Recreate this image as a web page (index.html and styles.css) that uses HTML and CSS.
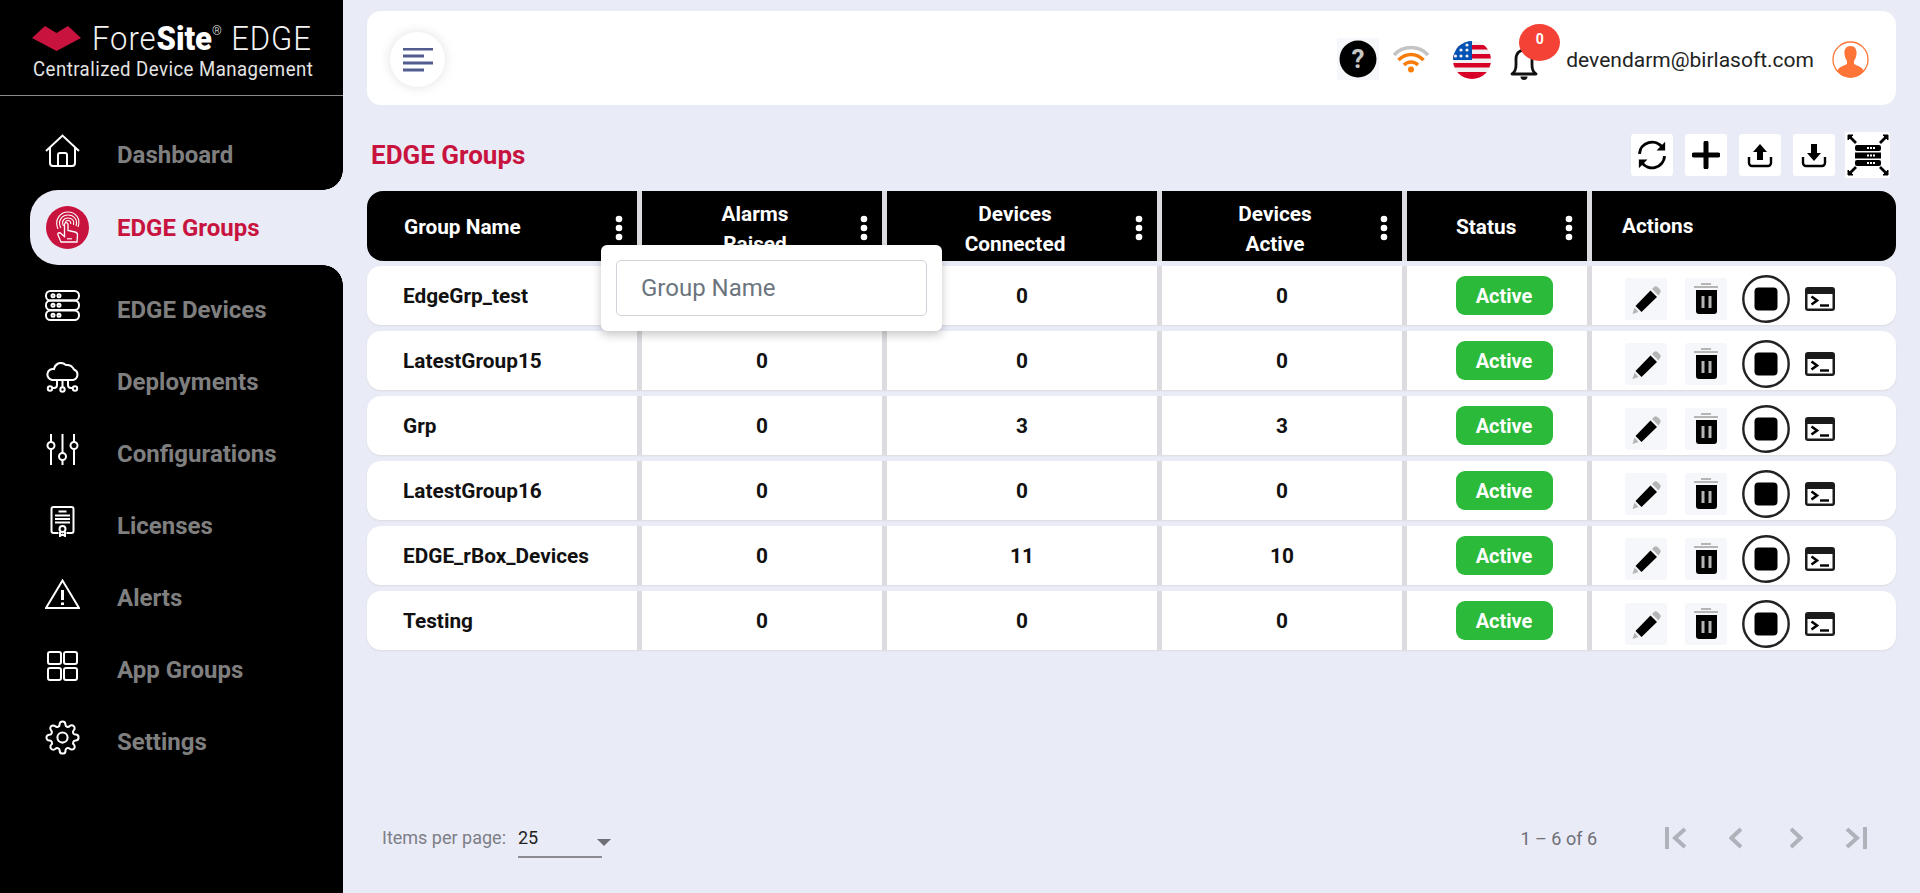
FILE: index.html
```html
<!DOCTYPE html>
<html lang="en">
<head>
<meta charset="utf-8">
<title>EDGE Groups</title>
<link rel="stylesheet" href="styles.css">
</head>
<body>
<svg class="defs" width="0" height="0" aria-hidden="true">
  <defs>
    <symbol id="i-pencil" viewBox="0 0 42 42">
      <path d="M13.500 34 L7.500 36 L9.500 29.500 Z" fill="#b5b5b5"/>
      <path d="M10.500 28 L25.500 12.500 L32 19 L16.500 34 Z" fill="#000"/>
      <path d="M27 11 L29 9 A2.500 2.500 0 0 1 32.500 9 L35 11.500 A2.500 2.500 0 0 1 35 15 L33.500 17.500 Z" fill="#b5b5b5"/>
    </symbol>
    <symbol id="i-trash" viewBox="0 0 42 42">
      <path d="M16 7 V5 H26 V7 Z" fill="#b5b5b5"/>
      <path d="M9 9 H33" stroke="#b5b5b5" stroke-width="2"/>
      <path d="M11 12 H32 V33 A3 3 0 0 1 29 36 H14 A3 3 0 0 1 11 33 Z" fill="#000"/>
      <path d="M18 18 V30 M25 18 V30" stroke="#b5b5b5" stroke-width="3"/>
    </symbol>
    <symbol id="i-stop" viewBox="0 0 48 48">
      <circle cx="24" cy="24" r="22.700" fill="#fff" stroke="#222" stroke-width="2.400"/>
      <rect x="12.500" y="12.500" width="23" height="23" rx="4" fill="#000"/>
    </symbol>
    <symbol id="i-term" viewBox="0 0 30 24">
      <rect width="30" height="24" rx="3" fill="#1b1b1b"/>
      <rect x="2.500" y="7" width="25" height="14.500" fill="#fff"/>
      <path d="M6.500 9.500 L12 13.500 L6.500 17.500" fill="none" stroke="#000" stroke-width="2.600"/>
      <path d="M15 18.500 H24" stroke="#000" stroke-width="2.400"/>
    </symbol>
    <symbol id="i-kebab" viewBox="0 0 8 26">
      <circle cx="4" cy="4" r="3.300" fill="#fff"/>
      <circle cx="4" cy="13" r="3.300" fill="#fff"/>
      <circle cx="4" cy="22" r="3.300" fill="#fff"/>
    </symbol>
    <clipPath id="flag-clip"><circle cx="19" cy="19" r="19"/></clipPath>
  </defs>
</svg>

<div class="app">
  <aside class="sidebar">
    <div class="brand">
      <div class="brand-top">
        <svg class="brand-mark" viewBox="0 0 49 25"><path d="M0 12 L13 0 L24.500 7 L36 0 L49 12 L24.500 25 Z" fill="#c8133f"/></svg>
        <span class="brand-name">Fore<b>Site</b><sup>®</sup> EDGE</span>
      </div>
      <div class="brand-sub">Centralized Device Management</div>
    </div>
    <nav class="nav">
      <a class="nav-item">
        <svg class="nav-icon" width="35" height="33" viewBox="0 0 35 33"><path d="M1 17 L17.500 1.500 L34 17 M5 13.500 V29 A3 3 0 0 0 8 32 H27 A3 3 0 0 0 30 29 V13.500 M13 32 V21 A2 2 0 0 1 15 19 H20 A2 2 0 0 1 22 21 V32"/></svg>
        <span>Dashboard</span>
      </a>
      <a class="nav-item active">
        <span class="nav-badge">
          <svg width="43" height="43" viewBox="0 0 43 43">
            <g fill="none" stroke="#fff" stroke-width="1.100">
              <path d="M12 23 C8 14 14 6 22 6 C30 6 35 13 32 21"/>
              <path d="M15 22 C11 15 16 9 22 9 C28 9 32 14 30 20"/>
              <path d="M17.500 20 C15 15 18 12 22 12 C26 12 29 15 27.500 19"/>
              <path d="M19.500 17.500 C19 15 20.500 14.500 22 14.500 C24 14.500 25 16 24.800 18"/>
              <path d="M15 36 L12 29 C11 27 13.500 26 15 27.500 L18.500 30.500 L18.500 18.500 C18.500 16 22 16 22 18.500 L22 24.500 L29 26 C31 26.500 31.500 27.500 31.500 29 L31 36 Z" fill="#c8133f" stroke-width="1.300"/>
              <path d="M21 32.800 H26"/>
            </g>
          </svg>
        </span>
        <span>EDGE Groups</span>
      </a>
      <a class="nav-item">
        <svg class="nav-icon" width="35" height="31" viewBox="0 0 35 31"><rect x="1" y="1" width="33" height="9.500" rx="4.500"/><rect x="1" y="10.500" width="33" height="9.500" rx="4.500"/><rect x="1" y="20.500" width="33" height="9.500" rx="4.500"/><circle cx="8" cy="5.700" r="1.500"/><circle cx="14" cy="5.700" r="1.500"/><circle cx="8" cy="15.300" r="1.500"/><circle cx="14" cy="15.300" r="1.500"/><circle cx="8" cy="25.300" r="1.500"/><circle cx="14" cy="25.300" r="1.500"/></svg>
        <span>EDGE Devices</span>
      </a>
      <a class="nav-item">
        <svg class="nav-icon" width="35" height="31" viewBox="0 0 35 31"><path d="M7 18 H28 A5.500 5.500 0 0 0 29 7.500 A8 8 0 0 0 21 3 A8 8 0 0 0 13 1.500 A8 8 0 0 0 9 7 A5.500 5.500 0 0 0 7 18 Z"/><path d="M12 18 V23 A3 3 0 0 1 9 26 H7 M17.500 18 V25 M23 18 V23 A3 3 0 0 0 26 26 H28"/><circle cx="5" cy="26.500" r="2.200"/><circle cx="17.500" cy="27.500" r="2.200"/><circle cx="30" cy="26.500" r="2.200"/></svg>
        <span>Deployments</span>
      </a>
      <a class="nav-item">
        <svg class="nav-icon" width="33" height="32" viewBox="0 0 33 32"><path d="M5 0 V8 M5 15 V31 M16.500 0 V19 M16.500 26 V31 M28 0 V8 M28 15 V31"/><circle cx="5" cy="11.500" r="3.500"/><circle cx="16.500" cy="22.500" r="3.500"/><circle cx="28" cy="11.500" r="3.500"/></svg>
        <span>Configurations</span>
      </a>
      <a class="nav-item">
        <svg class="nav-icon" width="24" height="31" viewBox="0 0 24 31"><path d="M8 27 H3 A2 2 0 0 1 1 25 V3 A2 2 0 0 1 3 1 H21 A2 2 0 0 1 23 3 V25 A2 2 0 0 1 21 27 H16"/><path d="M8 5.500 H16 M4.500 9.500 H19.500 M4.500 13 H19.500 M4.500 16.500 H19.500"/><circle cx="12" cy="23" r="3"/><path d="M9.500 26 V30 L12 28.500 L14.500 30 V26"/></svg>
        <span>Licenses</span>
      </a>
      <a class="nav-item">
        <svg class="nav-icon" width="35" height="30" viewBox="0 0 35 30"><path d="M17.500 1.500 L34 29 H1 Z"/><path class="thick" d="M17.500 11 V21 M17.500 23.500 V26"/></svg>
        <span>Alerts</span>
      </a>
      <a class="nav-item">
        <svg class="nav-icon" width="31" height="30" viewBox="0 0 31 30"><rect x="1" y="1" width="13" height="12" rx="2"/><rect x="17" y="1" width="13" height="12" rx="2"/><rect x="1" y="17" width="13" height="12" rx="2"/><rect x="17" y="17" width="13" height="12" rx="2"/></svg>
        <span>App Groups</span>
      </a>
      <a class="nav-item">
        <svg class="nav-icon" width="35" height="35" viewBox="0 0 24 24"><circle class="thin" cx="12" cy="12" r="3.500"/><path class="thin" d="M19.400 15a1.650 1.650 0 0 0 .33 1.820l.06.06a2 2 0 0 1 0 2.830 2 2 0 0 1-2.830 0l-.06-.06a1.650 1.650 0 0 0-1.820-.33 1.650 1.650 0 0 0-1 1.510V21a2 2 0 0 1-2 2 2 2 0 0 1-2-2v-.09A1.650 1.650 0 0 0 9 19.400a1.650 1.650 0 0 0-1.820.33l-.06.06a2 2 0 0 1-2.830 0 2 2 0 0 1 0-2.830l.06-.06a1.650 1.650 0 0 0 .33-1.820 1.650 1.650 0 0 0-1.510-1H3a2 2 0 0 1-2-2 2 2 0 0 1 2-2h.09A1.650 1.650 0 0 0 4.600 9a1.650 1.650 0 0 0-.33-1.820l-.06-.06a2 2 0 0 1 0-2.830 2 2 0 0 1 2.830 0l.06.06a1.650 1.650 0 0 0 1.820.33H9a1.650 1.650 0 0 0 1-1.510V3a2 2 0 0 1 2-2 2 2 0 0 1 2 2v.09a1.650 1.650 0 0 0 1 1.510 1.650 1.650 0 0 0 1.820-.33l.06-.06a2 2 0 0 1 2.830 0 2 2 0 0 1 0 2.830l-.06.06a1.650 1.650 0 0 0-.33 1.820V9a1.650 1.650 0 0 0 1.510 1H21a2 2 0 0 1 2 2 2 2 0 0 1-2 2h-.09a1.650 1.650 0 0 0-1.510 1z"/></svg>
        <span>Settings</span>
      </a>
    </nav>
  </aside>

  <main class="main">
    <header class="topbar">
      <button class="menu-btn" type="button" aria-label="Menu">
        <svg width="30" height="24" viewBox="0 0 30 24"><path d="M0 2 H30 M0 9 H21 M0 16 H30 M0 23 H21" transform="translate(0,-1)" stroke="#525c8f" stroke-width="2.800"/></svg>
      </button>
      <div class="top-tools">
        <span class="help-box">
          <svg width="38" height="38" viewBox="0 0 38 38"><circle cx="19" cy="19" r="18.500" fill="#000"/><text x="19" y="28" class="help-mark">?</text></svg>
        </span>
        <svg class="wifi" width="38" height="29" viewBox="0 0 38 29"><path d="M2 11 C11 1 27 1 36 11" fill="none" stroke="#c4c4c4" stroke-width="3.500"/><path d="M6.500 16 C14 8.500 24 8.500 31.500 16" fill="none" stroke="#f97b09" stroke-width="3.500"/><path d="M12 21 C16 17 22 17 26 21" fill="none" stroke="#f97b09" stroke-width="3.500"/><circle cx="19" cy="25.500" r="3" fill="#f97b09"/></svg>
        <svg class="flag" width="38" height="38" viewBox="0 0 38 38">
          <g clip-path="url(#flag-clip)">
            <rect width="38" height="38" fill="#f0f0f0"/>
            <rect y="4" width="38" height="4.500" fill="#d80027"/>
            <rect y="13" width="38" height="4.500" fill="#d80027"/>
            <rect y="22" width="38" height="4.500" fill="#d80027"/>
            <rect y="31" width="38" height="7" fill="#d80027"/>
            <path d="M0 0 H19 V19 H0 Z" fill="#0052b4"/>
            <g fill="#f0f0f0"><circle cx="14" cy="4" r="1.600"/><circle cx="8" cy="9" r="1.600"/><circle cx="14" cy="9" r="1.600"/><circle cx="2.500" cy="15" r="1.600"/><circle cx="8" cy="15" r="1.600"/><circle cx="14" cy="15" r="1.600"/></g>
          </g>
        </svg>
        <span class="bell">
          <svg width="28" height="32" viewBox="0 0 28 32"><path d="M2 26 C5 24 6 21 6 17 V11 C6 5 10 2 14 2 C18 2 22 5 22 11 V17 C22 21 23 24 26 26 Z" fill="#fff" stroke="#111" stroke-width="2.800" stroke-linejoin="round"/><path d="M10.500 28.500 A3.500 3.500 0 0 0 17.500 28.500 Z" fill="#111"/></svg>
          <span class="bell-count">0</span>
        </span>
        <span class="user-mail">devendarm@birlasoft.com</span>
        <svg class="avatar" width="37" height="37" viewBox="0 0 37 37"><circle cx="18.500" cy="18.500" r="17.500" fill="#fff" stroke="#ff7437" stroke-width="1.300"/><path d="M18.500 5 C14 5 12 8.500 12.500 13 C12.800 16 13.800 18 15 20 V23 C11 25 7 26 5 30 A17 17 0 0 0 32 30 C30 26 26 25 22 23 V20 C23.200 18 24.200 16 24.500 13 C25 8.500 23 5 18.500 5 Z" fill="#ff7437"/></svg>
      </div>
    </header>

    <div class="title-row">
      <h1 class="page-title">EDGE Groups</h1>
      <div class="toolbar">
        <button class="tool" type="button" aria-label="Refresh">
          <svg width="32" height="32" viewBox="0 0 28 28"><path d="M3 13 A11 11 0 0 1 23 7.500" fill="none" stroke="#000" stroke-width="2.600"/><path d="M25.500 2.500 V10 H18 Z" fill="#000"/><path d="M25 15 A11 11 0 0 1 5 20.500" fill="none" stroke="#000" stroke-width="2.600"/><path d="M2.500 25.500 V18 H10 Z" fill="#000"/></svg>
        </button>
        <button class="tool" type="button" aria-label="Add">
          <svg width="28" height="28" viewBox="0 0 28 28"><path d="M14 2 V26 M2 14 H26" stroke="#000" stroke-width="5" stroke-linecap="round"/></svg>
        </button>
        <button class="tool" type="button" aria-label="Upload">
          <svg width="26" height="26" viewBox="0 0 26 26"><path d="M13 2 L20 10 H16 V18 H10 V10 H6 Z" fill="#000"/><path d="M2 15 V21 A3 3 0 0 0 5 24 H21 A3 3 0 0 0 24 21 V15" fill="none" stroke="#000" stroke-width="2.400"/></svg>
        </button>
        <button class="tool" type="button" aria-label="Download">
          <svg width="26" height="26" viewBox="0 0 26 26"><path d="M13 19 L6 11 H10 V2 H16 V11 H20 Z" fill="#000"/><path d="M2 15 V21 A3 3 0 0 0 5 24 H21 A3 3 0 0 0 24 21 V15" fill="none" stroke="#000" stroke-width="2.400"/></svg>
        </button>
        <button class="tool tool-wide" type="button" aria-label="Cluster">
          <svg width="42" height="42" viewBox="0 0 42 42">
            <path d="M9 9 L3 3 M33 9 L39 3 M9 33 L3 39 M33 33 L39 39" stroke="#000" stroke-width="2.800"/>
            <path d="M1 6 V1 H6 Z M36 1 H41 V6 Z M1 36 V41 H6 Z M41 36 V41 H36 Z" fill="#000" stroke="#000" stroke-width="1"/>
            <rect x="8" y="11" width="26" height="6" rx="2" fill="#000"/><rect x="8" y="18.500" width="26" height="6" rx="0" fill="#000"/><rect x="8" y="26" width="26" height="6" rx="2" fill="#000"/>
            <path d="M20 14 H28 M20 21.500 H28 M20 29 H28" stroke="#fff" stroke-width="1.800" stroke-dasharray="2 1"/>
          </svg>
        </button>
      </div>
    </div>

    <section class="table">
      <div class="grid head">
        <div class="th th-left"><span class="th-label">Group Name</span><svg class="kebab"><use href="#i-kebab"/></svg></div>
        <div class="th"><span class="th-label two">Alarms<br>Raised</span><svg class="kebab"><use href="#i-kebab"/></svg></div>
        <div class="th"><span class="th-label two">Devices<br>Connected</span><svg class="kebab"><use href="#i-kebab"/></svg></div>
        <div class="th"><span class="th-label two">Devices<br>Active</span><svg class="kebab"><use href="#i-kebab"/></svg></div>
        <div class="th th-status"><span class="th-label">Status</span><svg class="kebab"><use href="#i-kebab"/></svg></div>
        <div class="th th-actions"><span class="th-label">Actions</span></div>
      </div>

      <div class="grid row">
        <div class="td td-name">EdgeGrp_test</div><div class="td">0</div><div class="td">0</div><div class="td">0</div>
        <div class="td td-status"><span class="badge">Active</span></div>
        <div class="td td-actions"><span class="act-box"><svg><use href="#i-pencil"/></svg></span><span class="act-box"><svg><use href="#i-trash"/></svg></span><svg class="act-stop"><use href="#i-stop"/></svg><svg class="act-term"><use href="#i-term"/></svg></div>
      </div>
      <div class="grid row">
        <div class="td td-name">LatestGroup15</div><div class="td">0</div><div class="td">0</div><div class="td">0</div>
        <div class="td td-status"><span class="badge">Active</span></div>
        <div class="td td-actions"><span class="act-box"><svg><use href="#i-pencil"/></svg></span><span class="act-box"><svg><use href="#i-trash"/></svg></span><svg class="act-stop"><use href="#i-stop"/></svg><svg class="act-term"><use href="#i-term"/></svg></div>
      </div>
      <div class="grid row">
        <div class="td td-name">Grp</div><div class="td">0</div><div class="td">3</div><div class="td">3</div>
        <div class="td td-status"><span class="badge">Active</span></div>
        <div class="td td-actions"><span class="act-box"><svg><use href="#i-pencil"/></svg></span><span class="act-box"><svg><use href="#i-trash"/></svg></span><svg class="act-stop"><use href="#i-stop"/></svg><svg class="act-term"><use href="#i-term"/></svg></div>
      </div>
      <div class="grid row">
        <div class="td td-name">LatestGroup16</div><div class="td">0</div><div class="td">0</div><div class="td">0</div>
        <div class="td td-status"><span class="badge">Active</span></div>
        <div class="td td-actions"><span class="act-box"><svg><use href="#i-pencil"/></svg></span><span class="act-box"><svg><use href="#i-trash"/></svg></span><svg class="act-stop"><use href="#i-stop"/></svg><svg class="act-term"><use href="#i-term"/></svg></div>
      </div>
      <div class="grid row">
        <div class="td td-name">EDGE_rBox_Devices</div><div class="td">0</div><div class="td">11</div><div class="td">10</div>
        <div class="td td-status"><span class="badge">Active</span></div>
        <div class="td td-actions"><span class="act-box"><svg><use href="#i-pencil"/></svg></span><span class="act-box"><svg><use href="#i-trash"/></svg></span><svg class="act-stop"><use href="#i-stop"/></svg><svg class="act-term"><use href="#i-term"/></svg></div>
      </div>
      <div class="grid row">
        <div class="td td-name">Testing</div><div class="td">0</div><div class="td">0</div><div class="td">0</div>
        <div class="td td-status"><span class="badge">Active</span></div>
        <div class="td td-actions"><span class="act-box"><svg><use href="#i-pencil"/></svg></span><span class="act-box"><svg><use href="#i-trash"/></svg></span><svg class="act-stop"><use href="#i-stop"/></svg><svg class="act-term"><use href="#i-term"/></svg></div>
      </div>

      <div class="filter-pop">
        <input class="filter-input" type="text" placeholder="Group Name">
      </div>
    </section>

    <footer class="pager">
      <div class="pager-left">
        <span class="pager-label">Items per page:</span>
        <span class="pager-select"><span>25</span><i class="caret"></i></span>
      </div>
      <div class="pager-right">
        <span class="pager-range">1 – 6 of 6</span>
        <div class="pager-nav">
          <svg width="22" height="22" viewBox="0 0 22 22"><path d="M2 0 V22 M20 2 L10 11 L20 20"/></svg>
          <svg width="13" height="22" viewBox="0 0 13 22"><path d="M12 2 L2.500 11 L12 20"/></svg>
          <svg width="13" height="22" viewBox="0 0 13 22"><path d="M1 2 L10.500 11 L1 20"/></svg>
          <svg width="22" height="22" viewBox="0 0 22 22"><path d="M20 0 V22 M2 2 L12 11 L2 20"/></svg>
        </div>
      </div>
    </footer>
  </main>
</div>
</body>
</html>
```
FILE: styles.css
```css
* { box-sizing: border-box; }
html, body { margin: 0; height: 100%; }
body {
  background: #e9ebf7;
  font-family: Roboto, "Noto Sans", sans-serif;
  color: #111;
  overflow: hidden;
}
.defs { position: absolute; }
button { border: 0; padding: 0; background: none; font: inherit; }

.app { display: flex; height: 893px; }

/* Sidebar */
.sidebar { width: 343px; flex: none; background: #000; display: flex; flex-direction: column; }
.brand { height: 96px; border-bottom: 1px solid #8a8a8a; padding: 26px 0 0 32px; }
.brand-top { display: flex; align-items: flex-start; gap: 11px; height: 32px; }
.brand-mark { width: 49px; height: 25px; flex: none; }
.brand-name {
  color: #f2f2f2;
  font-size: 33px;
  font-weight: 300;
  line-height: 25px;
  white-space: nowrap;
  transform: scaleX(.94);
  transform-origin: 0 0;
  letter-spacing: 1px;
}
.brand-name b { font-weight: 900; color: #fff; letter-spacing: 0; }
.brand-name sup { font-size: 13px; line-height: 0; vertical-align: 15px; }
.brand-sub {
  color: #e4e4e4;
  font-size: 20px;
  line-height: 22px;
  white-space: nowrap;
  letter-spacing: .5px;
  margin-left: 1px;
  transform: scaleX(.93);
  transform-origin: 0 0;
}

.nav { padding-top: 23px; display: flex; flex-direction: column; }
.nav-item {
  height: 72px;
  display: flex;
  align-items: center;
  padding-left: 45px;
  color: #7f7f7f;
  font-size: 24px;
  font-weight: 700;
}
.nav-icon {
  flex: none;
  width: 35px;
  margin-right: 37px;
  margin-top: -9px;
  fill: none;
  stroke: #fff;
  stroke-width: 2;
}
.nav-icon .thin { stroke-width: 1.400; }
.nav-icon .thick { stroke-width: 3; }
.active {
  position: relative;
  height: 75px;
  margin: -1px 0 9px 30px;
  padding-left: 16px;
  background: #e9ebf7;
  border-radius: 28px 0 0 28px;
  color: #c8133f;
}
.active::before,
.active::after {
  content: "";
  position: absolute;
  right: 0;
  width: 20px;
  height: 20px;
}
.active::before { top: -20px; background: radial-gradient(circle at 0 0, #000 19.500px, #e9ebf7 20px); }
.active::after { bottom: -20px; background: radial-gradient(circle at 0 100%, #000 19.500px, #e9ebf7 20px); }
.nav-badge {
  width: 43px;
  height: 43px;
  border-radius: 50%;
  background: #c8133f;
  margin-right: 28px;
  display: block;
  flex: none;
}
.nav-badge svg { display: block; }

/* Main */
.main { flex: 1; min-width: 0; padding: 11px 24px 0 24px; display: flex; flex-direction: column; position: relative; }
.topbar {
  height: 94px;
  background: #fff;
  border-radius: 14px;
  display: flex;
  align-items: center;
  justify-content: space-between;
  padding: 3px 27px 0 23px;
}
.menu-btn {
  width: 55px;
  height: 55px;
  border-radius: 50%;
  background: #fff;
  box-shadow: 0 0 12px rgba(0, 0, 0, .12);
  display: flex;
  align-items: center;
  justify-content: center;
}
.top-tools { display: flex; align-items: center; }
.help-box { width: 42px; height: 42px; background: #f5f7fa; display: flex; align-items: center; justify-content: center; margin-top: -1px; }
.help-mark { fill: #c6c6c6; font-size: 26px; font-weight: 700; text-anchor: middle; font-family: Roboto, sans-serif; }
.wifi { margin: -3px 0 0 13px; }
.flag { margin: 1px 0 0 23px; }
.bell { position: relative; margin: 8px 0 0 19px; width: 28px; height: 32px; display: block; }
.bell svg { display: block; }
.bell-count {
  position: absolute;
  left: 9px;
  top: -24px;
  width: 41px;
  height: 37px;
  border-radius: 50%;
  background: #f44336;
  color: #fff;
  font-size: 14px;
  font-weight: 700;
  text-align: center;
  line-height: 30px;
}
.user-mail { margin-left: 28px; font-size: 21px; color: #222; line-height: 24px; }
.avatar { margin-left: 18px; }

.title-row { display: flex; align-items: center; justify-content: space-between; height: 43px; margin-top: 28px; margin-bottom: 15px; }
.page-title { margin: 0 0 0 4px; color: #c8133f; font-size: 26px; font-weight: 700; }
.toolbar { display: flex; align-items: center; gap: 12px; margin-right: 6px; }
.tool { width: 42px; height: 42px; background: #fff; border-radius: 3px; display: flex; align-items: center; justify-content: center; }
.tool-wide { width: 45px; height: 46px; border-radius: 0; margin: -2px 0 -2px -2px; }

/* Table */
.table { position: relative; }
.grid { display: grid; grid-template-columns: 275px 245px 275px 245px 185px 304px; }
.head { height: 70px; background: #000; border-radius: 16px; margin-bottom: 5px; overflow: hidden; }
.th {
  position: relative;
  border-right: 5px solid #dcdce0;
  display: flex;
  align-items: center;
  justify-content: center;
  color: #fff;
  font-size: 20.800px;
  font-weight: 700;
  padding-right: 14px;
}
.th-label { padding-top: 1px; }
.th-label.two { line-height: 30px; text-align: center; padding-top: 6px; }
.th-left { justify-content: flex-start; padding-left: 37px; }
.th-status { justify-content: flex-start; padding-left: 49px; }
.th-actions { justify-content: flex-start; padding-left: 30px; border-right: 0; align-items: flex-start; padding-top: 22px; }
.kebab { position: absolute; right: 14px; top: 24px; width: 8px; height: 26px; }
.row { height: 59px; background: #fff; border-radius: 14px; margin-bottom: 6px; box-shadow: 0 1px 2px #dcdce0; }
.td {
  display: flex;
  align-items: center;
  justify-content: center;
  border-right: 5px solid #dcdce0;
  font-size: 20.800px;
  font-weight: 700;
  color: #111;
}
.td-name { justify-content: flex-start; padding-left: 36px; }
.td-status { padding-left: 14px; }
.td-actions { justify-content: flex-start; border-right: 0; padding: 7px 0 0 33px; }
.badge {
  width: 97px;
  height: 39px;
  border-radius: 9px;
  background: #2cba3a;
  color: #fff;
  font-size: 20px;
  font-weight: 700;
  display: flex;
  align-items: center;
  justify-content: center;
}
.act-box { width: 42px; height: 42px; background: #f5f7fa; border-radius: 3px; margin-right: 18px; display: block; flex: none; }
.act-box svg { width: 42px; height: 42px; display: block; }
.act-box + .act-box { margin-right: 15px; }
.act-stop { width: 48px; height: 48px; flex: none; }
.act-term { width: 30px; height: 24px; margin-left: 15px; flex: none; }

.filter-pop {
  position: absolute;
  left: 234px;
  top: 54px;
  width: 341px;
  height: 86px;
  background: #fff;
  border-radius: 6px;
  padding: 15px;
  box-shadow: 0 4px 10px rgba(0, 0, 0, .22);
}
.filter-input {
  display: block;
  width: 100%;
  height: 56px;
  border: 1px solid #ced4da;
  border-radius: 5px;
  padding: 0 24px;
  font: 400 24px Roboto, sans-serif;
  color: #333;
  outline: 0;
}
.filter-input::placeholder { color: #6c757d; opacity: 1; }

/* Pager */
.pager {
  margin-top: auto;
  margin-bottom: 35px;
  height: 40px;
  display: flex;
  align-items: flex-start;
  justify-content: space-between;
  font-size: 18px;
}
.pager-left { display: flex; padding-left: 15px; align-items: flex-start; }
.pager-label { color: #7e7e86; line-height: 40px; }
.pager-select {
  position: relative;
  margin-left: 12px;
  width: 84px;
  height: 40px;
  border-bottom: 2px solid #8a8a90;
  color: #222;
  line-height: 40px;
}
.caret {
  position: absolute;
  right: -9px;
  top: 21px;
  border-left: 7px solid transparent;
  border-right: 7px solid transparent;
  border-top: 7px solid #6f6f76;
}
.pager-right { display: flex; align-items: center; height: 40px; }
.pager-range { color: #6f6f76; margin-right: 68px; }
.pager-nav { display: flex; align-items: center; margin-right: 29px; }
.pager-nav svg { fill: none; stroke: #b0b2ba; stroke-width: 4; display: block; }
.pager-nav svg + svg { margin-left: 42px; }
.pager-nav svg:nth-child(3) { margin-left: 48px; }
```
